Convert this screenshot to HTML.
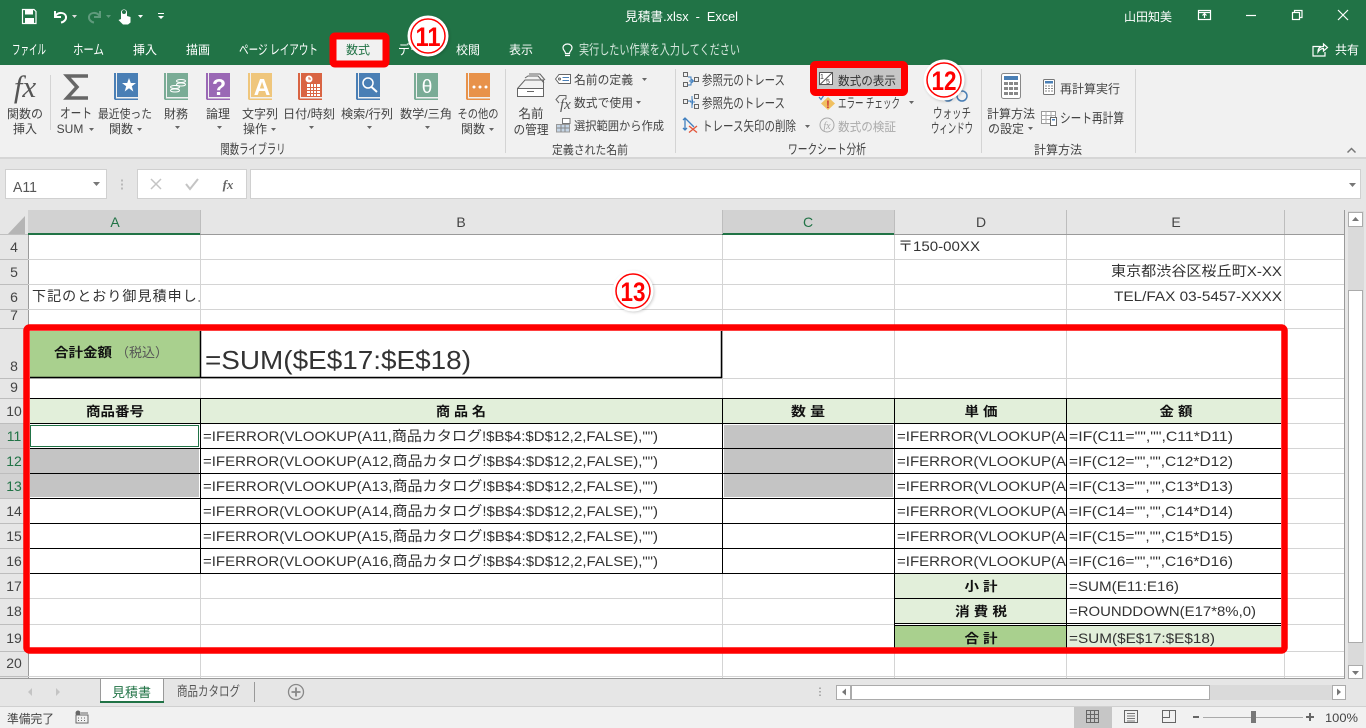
<!DOCTYPE html>
<html lang="ja">
<head>
<meta charset="utf-8">
<title>見積書.xlsx - Excel</title>
<style>
html,body{margin:0;padding:0;width:1366px;height:728px;overflow:hidden;background:#e6e6e6}
svg{display:block;position:absolute;left:0;top:0}
text{font-family:"Liberation Sans","Noto Sans CJK JP",sans-serif;white-space:pre}
.w{fill:#fff;font-size:12px}
.r{fill:#444;font-size:12px}
.w.kk,.r.kk{font-size:13.5px}
.c{text-anchor:middle}
.h{fill:#444;font-size:14px;text-anchor:middle}
.t{fill:#333;font-size:14px}
.b{fill:#111;font-size:13px;font-weight:bold;text-anchor:middle}
.grid{stroke:#d4d4d4;stroke-width:1;fill:none}
.k{stroke:#000;stroke-width:1;fill:none}
.hl{stroke:#bdbdbd;stroke-width:1;fill:none}
.wi{stroke:#fff;stroke-width:1.2;fill:none}
.ic{stroke:#666;stroke-width:1;fill:none}
.num{fill:#f00;font-weight:bold;text-anchor:middle;font-size:27px}
</style>
</head>
<body>
<svg width="1366" height="728" viewBox="0 0 1366 728" xmlns="http://www.w3.org/2000/svg">
<defs>
<clipPath id="ca"><rect x="30" y="285" width="170" height="24"/></clipPath>
<clipPath id="cd"><rect x="895" y="424" width="171" height="150"/></clipPath>
<filter id="sh" x="-30%" y="-30%" width="160%" height="160%"><feGaussianBlur stdDeviation="1.5"/></filter>
<g id="book"><rect x="0" y="0" width="2" height="26"/><rect x="3" y="0" width="21" height="24"/><rect x="0.500" y="25.500" width="23.500" height="1.500"/></g>
</defs>

<!-- title + tab bar -->
<rect width="1366" height="65" fill="#217346"/>
<!-- QAT -->
<path d="M22.500 9.500H34L36 11.500V23.500H22.500Z" class="wi" stroke-width="1.500"/>
<rect x="25" y="10" width="8" height="4.500" fill="#fff"/>
<rect x="25" y="18" width="9" height="5" fill="#fff"/>
<path d="M55 11V17H61M55 16.500C58 11.500 65 12 66 16.500C66.500 19.500 64 22 61 22.500" stroke="#fff" stroke-width="2" fill="none"/>
<path d="M72 15h5l-2.500 3z" fill="#ddd"/>
<path d="M100 11V17H94M100 16.500C97 11.500 90 12 89 16.500C88.500 19.500 91 22 94 22.500" stroke="#5f9a7c" stroke-width="2" fill="none"/>
<path d="M106 15h5l-2.500 3z" fill="#5f9a7c"/>
<path d="M121 12.500C121 8.500 127 8.500 127 12.500V16L130.500 17V22.500L128 24.500H123L118.500 20L121 19Z" fill="#fff"/>
<circle cx="124" cy="12" r="2" fill="#217346"/>
<path d="M138 15h5l-2.500 3z" fill="#fff"/>
<rect x="158" y="13" width="6" height="1" fill="#fff"/>
<path d="M158 16h6l-3 3z" fill="#fff"/>
<text x="625" y="21" class="w" style="font-size:12.500px" textLength="113" lengthAdjust="spacingAndGlyphs">見積書.xlsx  -  Excel</text>
<text x="1124" y="21" class="w" textLength="48" lengthAdjust="spacingAndGlyphs">山田知美</text>
<!-- window controls -->
<rect x="1198.500" y="10.500" width="12" height="9" class="wi"/>
<path d="M1198.500 12.500H1210.500M1204.500 18V14M1202.500 15.500L1204.500 13.500L1206.500 15.500" class="wi"/>
<path d="M1246 15.500H1256" class="wi"/>
<rect x="1292.500" y="12.500" width="7" height="7" class="wi"/>
<path d="M1294.500 12V10.500H1302V17.500H1300" class="wi"/>
<path d="M1338 10L1348 20M1348 10L1338 20" class="wi"/>
<!-- tabs -->
<text x="12" y="54.500" class="w kk" textLength="34" lengthAdjust="spacingAndGlyphs">ファイル</text>
<text x="73" y="54.500" class="w kk" textLength="31" lengthAdjust="spacingAndGlyphs">ホーム</text>
<text x="133" y="54" class="w" textLength="24">挿入</text>
<text x="186" y="54" class="w" textLength="24">描画</text>
<text x="239" y="54.500" class="w kk" textLength="79" lengthAdjust="spacingAndGlyphs">ページ レイアウト</text>
<text x="398" y="54.500" class="w kk" textLength="36" lengthAdjust="spacingAndGlyphs">データ</text>
<text x="456" y="54" class="w" textLength="24">校閲</text>
<text x="509" y="54" class="w" textLength="24">表示</text>
<path d="M565 55.500H570M565.500 53.500C565.500 51 563 50.500 563 47.800C563 45.500 565 44 567.500 44C570 44 572 45.500 572 47.800C572 50.500 569.500 51 569.500 53.500Z" class="wi" stroke-width="1"/>
<text x="579" y="54.500" class="w kk" style="fill:#d5e6dc" textLength="161" lengthAdjust="spacingAndGlyphs">実行したい作業を入力してください</text>
<path d="M1321 46.500H1313V56H1325V52M1318 52C1318 47.500 1321 46.500 1323.500 46.500V44L1327.500 47.500L1323.500 51V48.500C1321 48.500 1319.500 49.500 1318 52Z" class="wi" stroke-width="1"/>
<text x="1335" y="54" class="w" textLength="24">共有</text>

<!-- ribbon -->
<rect y="65" width="1366" height="93" fill="#f1f1f1"/>
<rect y="157" width="1366" height="2" fill="#d6d6d6"/>
<path d="M50.500 75V130M505.500 69V153M675.500 69V153M981.500 69V153M1135.500 69V153" stroke="#d4d4d4"/>

<text x="25" y="97" text-anchor="middle" style="font-family:'Liberation Serif',serif;font-style:italic;font-size:31px;fill:#555">fx</text>
<text x="25" y="118" class="r c">関数の</text>
<text x="25" y="133" class="r c">挿入</text>

<path d="M88 76H67L77 87L67 98H88" fill="none" stroke="#666" stroke-width="3.500"/>
<text x="76" y="118" class="r c kk" textLength="32" lengthAdjust="spacingAndGlyphs">オート</text>
<text x="70" y="133" class="r c">SUM</text>
<path d="M89 128h5l-2.500 3z" fill="#666"/>

<!-- function books -->
<g fill="#4a7fb5" transform="translate(114,73)"><use href="#book"/></g>
<path d="M129 78L130.800 83L136 83L131.800 86.200L133.300 91.500L129 88.300L124.700 91.500L126.200 86.200L122 83L127.200 83Z" fill="#fff"/>
<g fill="#7aac96" transform="translate(164,73)"><use href="#book"/></g>
<g fill="none" stroke="#fff"><ellipse cx="181" cy="81" rx="4.500" ry="1.500"/><ellipse cx="181" cy="84.500" rx="4.500" ry="1.500"/><ellipse cx="175" cy="87" rx="4.500" ry="1.500"/><ellipse cx="175" cy="90.500" rx="4.500" ry="1.500"/></g>
<g fill="#9a68b5" transform="translate(206,73)"><use href="#book"/></g>
<text x="219" y="95" style="fill:#fff;font-size:23px;font-weight:bold" text-anchor="middle">?</text>
<g fill="#efc67c" transform="translate(248,73)"><use href="#book"/></g>
<text x="262" y="95" style="fill:#fff;font-size:23px;font-weight:bold" text-anchor="middle">A</text>
<g fill="#d96443" transform="translate(298,73)"><use href="#book"/></g>
<circle cx="309" cy="79" r="3.500" fill="#fff"/>
<path d="M309 77V79H311" stroke="#d96443" fill="none"/>
<path d="M307 84H320V96H307Z" fill="#fff"/>
<path d="M310.500 84V96M313.500 84V96M316.500 84V96M307 87.500H320M307 90.500H320M307 93.500H320" stroke="#d96443"/>
<g fill="#4a7fb5" transform="translate(356,73)"><use href="#book"/></g>
<circle cx="368" cy="83" r="5" fill="none" stroke="#fff" stroke-width="1.500"/>
<path d="M371.500 87L377 92" stroke="#fff" stroke-width="2"/>
<g fill="#7aac96" transform="translate(414,73)"><use href="#book"/></g>
<text x="427" y="93" style="fill:#fff;font-size:19px" text-anchor="middle">θ</text>
<g fill="#e8924a" transform="translate(466,73)"><use href="#book"/></g>
<circle cx="474" cy="87" r="1.500" fill="#fff"/><circle cx="480" cy="87" r="1.500" fill="#fff"/><circle cx="486" cy="87" r="1.500" fill="#fff"/>

<text x="125" y="118" class="r c" textLength="54" lengthAdjust="spacingAndGlyphs">最近使った</text>
<text x="121" y="133" class="r c">関数</text>
<path d="M137 128h5l-2.500 3z" fill="#666"/>
<text x="176" y="118" class="r c">財務</text><path d="M175 126h5l-2.500 3z" fill="#666"/>
<text x="218" y="118" class="r c">論理</text><path d="M217 126h5l-2.500 3z" fill="#666"/>
<text x="260" y="118" class="r c">文字列</text>
<text x="255" y="133" class="r c">操作</text><path d="M271 128h5l-2.500 3z" fill="#666"/>
<text x="309" y="118" class="r c" textLength="52" lengthAdjust="spacingAndGlyphs">日付/時刻</text><path d="M309 126h5l-2.500 3z" fill="#666"/>
<text x="367" y="118" class="r c" textLength="52" lengthAdjust="spacingAndGlyphs">検索/行列</text><path d="M367 126h5l-2.500 3z" fill="#666"/>
<text x="426" y="118" class="r c" textLength="52" lengthAdjust="spacingAndGlyphs">数学/三角</text><path d="M425 126h5l-2.500 3z" fill="#666"/>
<text x="478" y="118" class="r c" textLength="41" lengthAdjust="spacingAndGlyphs">その他の</text>
<text x="473" y="133" class="r c">関数</text><path d="M489 128h5l-2.500 3z" fill="#666"/>
<text x="253" y="154" class="r c kk" textLength="65" lengthAdjust="spacingAndGlyphs">関数ライブラリ</text>

<!-- defined names -->
<g class="ic" stroke="#666" fill="none">
<rect x="517.500" y="88.500" width="26" height="8" fill="#fff"/>
<path d="M517.500 88.500L525 80H543.500L543.500 88.500"/>
<path d="M525 78L528 76H538L544 83"/>
<path d="M529 74H540L545 80"/>
<path d="M527 91.500H534"/>
</g>
<text x="531" y="118" class="r c" style="font-size:12.500px">名前</text>
<text x="531" y="134" class="r c" style="font-size:12.500px" textLength="35" lengthAdjust="spacingAndGlyphs">の管理</text>
<path d="M555.500 79L559 74.500H570.500V83.500H559Z" fill="#fff" stroke="#666"/>
<path d="M562.500 77.500H569M562.500 80.500H569" stroke="#4a7fb5"/>
<circle cx="559.500" cy="79" r="1" fill="none" stroke="#666"/>
<text x="574" y="84" class="r" textLength="59" lengthAdjust="spacingAndGlyphs">名前の定義</text>
<path d="M642 78h5l-2.500 3z" fill="#666"/>
<path d="M559 103L556 99.500L559.500 95.500H566V99" class="ic"/>
<text x="560" y="109" style="font-family:'Liberation Serif',serif;font-style:italic;font-size:15px;fill:#555">fx</text>
<text x="574" y="107" class="r" textLength="59" lengthAdjust="spacingAndGlyphs">数式で使用</text>
<path d="M636 101h5l-2.500 3z" fill="#666"/>
<rect x="556.500" y="124.500" width="13" height="7.500" fill="#c5d5e5" stroke="#999"/>
<rect x="562.500" y="118.500" width="7.500" height="5" fill="#fff" stroke="#777"/>
<path d="M561 124.500V132M565 124.500V132M556.500 128H569.500" stroke="#888"/>
<text x="574" y="130" class="r" textLength="90" lengthAdjust="spacingAndGlyphs">選択範囲から作成</text>
<text x="590" y="154" class="r c" textLength="76" lengthAdjust="spacingAndGlyphs">定義された名前</text>

<!-- formula auditing -->
<g fill="none" stroke="#666">
<rect x="683.500" y="72.500" width="4" height="4"/><rect x="683.500" y="82.500" width="4" height="4"/><rect x="694.500" y="77.500" width="4" height="4"/>
<rect x="683.500" y="99.500" width="4" height="4"/><rect x="694.500" y="94.500" width="4" height="4"/><rect x="694.500" y="104.500" width="4" height="4"/>
</g>
<path d="M688 77H691V85H688M689 81H693M691.500 79L693.500 81L691.500 83" stroke="#3f7fbf" fill="none"/>
<path d="M688 101H691M692 96V108M690 102H695M692.500 99.500V104.500" stroke="#3f7fbf" fill="none"/>
<text x="702" y="85" class="r kk" textLength="83" lengthAdjust="spacingAndGlyphs">参照元のトレース</text>
<text x="702" y="108" class="r kk" textLength="83" lengthAdjust="spacingAndGlyphs">参照先のトレース</text>
<path d="M685 118V130M683 120L685 118L687 120M683 128L685 130L687 128M686 119L694 127" stroke="#3f7fbf" fill="none" stroke-width="1.300"/>
<path d="M689 126L697 132.500M697 126L689 132.500" stroke="#e2553a" stroke-width="1.300"/>
<text x="702" y="131" class="r kk" textLength="94" lengthAdjust="spacingAndGlyphs">トレース矢印の削除</text>
<path d="M805 125h5l-2.500 3z" fill="#666"/>
<rect x="817" y="68" width="84" height="21" fill="#c6c6c6"/>
<rect x="819.500" y="72.500" width="13" height="12" fill="#fff" stroke="#555"/>
<path d="M819.500 85L832.500 72.500" stroke="#555"/>
<text x="820" y="79" style="font-size:7px;fill:#333">1</text>
<text x="826" y="84" style="font-size:7px;fill:#333">5</text>
<text x="838" y="85" class="r" style="fill:#333" textLength="58" lengthAdjust="spacingAndGlyphs">数式の表示</text>
<path d="M828 97L835 103.500L828 110L821 103.500Z" fill="#f0c060"/>
<text x="828" y="108" style="font-size:11px;font-weight:bold;fill:#c33" text-anchor="middle">!</text>
<path d="M819 97L821 99.500L824 95" stroke="#3f7fbf" fill="none" stroke-width="1.200"/>
<text x="838" y="108" class="r kk" textLength="62" lengthAdjust="spacingAndGlyphs">エラー チェック</text>
<path d="M909 101h5l-2.500 3z" fill="#666"/>
<circle cx="827" cy="125" r="7" fill="none" stroke="#a8a8a8"/>
<text x="827" y="129" style="font-family:'Liberation Serif',serif;font-style:italic;font-size:10px;fill:#a8a8a8" text-anchor="middle">fx</text>
<text x="838" y="131" class="r" style="fill:#aaa" textLength="58" lengthAdjust="spacingAndGlyphs">数式の検証</text>
<text x="827" y="154" class="r c kk" textLength="78" lengthAdjust="spacingAndGlyphs">ワークシート分析</text>
<g fill="none" stroke="#4a7fb5" stroke-width="1.500"><circle cx="948" cy="96" r="5"/><circle cx="962" cy="96" r="5"/><path d="M953 95H957"/></g>
<text x="952" y="118" class="r c kk" textLength="38" lengthAdjust="spacingAndGlyphs">ウォッチ</text>
<text x="952" y="133" class="r c kk" textLength="42" lengthAdjust="spacingAndGlyphs">ウィンドウ</text>

<!-- calculation -->
<rect x="1001.500" y="73.500" width="19" height="25" rx="2" fill="#fff" stroke="#888"/>
<rect x="1004" y="76" width="14" height="4" fill="#4a7fb5"/>
<g fill="#888"><rect x="1004" y="82" width="4" height="3"/><rect x="1009" y="82" width="4" height="3"/><rect x="1014" y="82" width="4" height="3"/><rect x="1004" y="87" width="4" height="3"/><rect x="1009" y="87" width="4" height="3"/><rect x="1014" y="87" width="4" height="3"/><rect x="1004" y="92" width="4" height="3"/><rect x="1009" y="92" width="4" height="3"/><rect x="1014" y="92" width="4" height="3"/></g>
<text x="1011" y="118" class="r c" textLength="48" lengthAdjust="spacingAndGlyphs">計算方法</text>
<text x="1006" y="133" class="r c" textLength="36" lengthAdjust="spacingAndGlyphs">の設定</text>
<path d="M1028 127h5l-2.500 3z" fill="#666"/>
<rect x="1043.500" y="79.500" width="11" height="15" rx="1" fill="#fff" stroke="#777"/>
<rect x="1045" y="81" width="8" height="2.500" fill="#4a7fb5"/>
<path d="M1045 86h8M1045 88.500h8M1045 91h8" stroke="#888" stroke-dasharray="2 1"/>
<text x="1060" y="93" class="r" textLength="60" lengthAdjust="spacingAndGlyphs">再計算実行</text>
<rect x="1041.500" y="111.500" width="14" height="12" fill="#fff" stroke="#999"/>
<path d="M1041.500 115.500H1055.500M1041.500 119.500H1055.500M1046 111.500V123.500M1051 111.500V123.500" stroke="#aaa"/>
<rect x="1050.500" y="117.500" width="6" height="8" fill="#fff" stroke="#666"/>
<rect x="1052" y="119" width="3" height="1.500" fill="#4a7fb5"/>
<text x="1060" y="123" class="r kk" textLength="64" lengthAdjust="spacingAndGlyphs">シート再計算</text>
<text x="1058" y="154" class="r c" textLength="48" lengthAdjust="spacingAndGlyphs">計算方法</text>
<path d="M1347.500 152.500L1351.500 148.500L1355.500 152.500" stroke="#777" stroke-width="1.500" fill="none"/>

<!-- formula bar -->
<rect x="5.500" y="169.500" width="101" height="29" fill="#fff" stroke="#d0d0d0"/>
<text x="13" y="192" style="font-size:15px;fill:#555" textLength="24" lengthAdjust="spacingAndGlyphs">A11</text>
<path d="M93 182h7l-3.500 4z" fill="#777"/>
<path d="M122 179.500v2M122 183.500v2M122 187.500v2" stroke="#aaa" stroke-width="1.500"/>
<rect x="137.500" y="169.500" width="109" height="29" fill="#fff" stroke="#d0d0d0"/>
<path d="M151 179L161 189M161 179L151 189" stroke="#c4c4c4" stroke-width="1.500"/>
<path d="M186 184L190 189L198 179" stroke="#c4c4c4" stroke-width="2" fill="none"/>
<text x="228" y="189" text-anchor="middle" style="font-family:'Liberation Serif',serif;font-style:italic;font-weight:bold;font-size:13px;fill:#666">fx</text>
<rect x="250.500" y="169.500" width="1110" height="29" fill="#fff" stroke="#d0d0d0"/>
<path d="M1349 183h7l-3.500 4z" fill="#777"/>

<!-- column headers -->
<rect x="0" y="210" width="1344" height="25" fill="#e6e6e6"/>
<path d="M25 216V234H8Z" fill="#b5b5b5"/>
<rect x="28" y="210" width="172" height="25" fill="#d2d2d2"/>
<rect x="722" y="210" width="172" height="25" fill="#d2d2d2"/>
<rect x="28" y="233" width="172" height="2" fill="#217346"/>
<rect x="722" y="233" width="172" height="2" fill="#217346"/>
<path d="M200.500 210V234M722.500 210V234M894.500 210V234M1066.500 210V234M1284.500 210V234" class="hl"/>
<rect x="0" y="234.500" width="28" height="0.800" fill="#9a9a9a"/>
<rect x="200" y="234" width="522" height="1" fill="#9a9a9a"/>
<rect x="894" y="234" width="450" height="1" fill="#9a9a9a"/>
<text x="115" y="227" class="h" style="fill:#217346">A</text>
<text x="461" y="227" class="h">B</text>
<text x="808" y="227" class="h" style="fill:#217346">C</text>
<text x="981" y="227" class="h">D</text>
<text x="1176" y="227" class="h">E</text>

<!-- sheet background -->
<rect x="28" y="235" width="1316" height="443" fill="#fff"/>
<rect x="0" y="235" width="28" height="443" fill="#e6e6e6"/>
<rect x="0" y="423" width="28" height="75" fill="#d2d2d2"/>
<path d="M28.500 235V678M1344.500 210V678" stroke="#9a9a9a"/>
<!-- row header lines -->
<path d="M0 259.500H28M0 284.500H28M0 309.500H28M0 328.500H28M0 378.500H28M0 398.500H28M0 423.500H28M0 448.500H28M0 473.500H28M0 498.500H28M0 523.500H28M0 548.500H28M0 573.500H28M0 598.500H28M0 624.500H28M0 651.500H28M0 676.500H28" class="hl"/>
<!-- grid -->
<path class="grid" d="M28 259.500H1344M28 284.500H1344M28 309.500H1344M28 328.500H1344M28 378.500H1344M28 398.500H1344M1284 423.500H1344M1284 448.500H1344M1284 473.500H1344M1284 498.500H1344M1284 523.500H1344M1284 548.500H1344M1284 573.500H1344M28 598.500H894M1284 598.500H1344M28 624.500H894M1284 624.500H1344M28 651.500H1344M28 676.500H1344"/>
<path class="grid" d="M200.500 235V678M722.500 235V678M894.500 235V678M1066.500 235V328M1066.500 328V398M1066.500 651V678M1284.500 235V678"/>

<!-- row numbers -->
<text x="14" y="252" class="h">4</text>
<text x="14" y="277" class="h">5</text>
<text x="14" y="302" class="h">6</text>
<text x="14" y="320" class="h">7</text>
<text x="14" y="371" class="h">8</text>
<text x="14" y="392" class="h">9</text>
<text x="14" y="416" class="h">10</text>
<text x="14" y="441" class="h" style="fill:#217346">11</text>
<text x="14" y="466" class="h" style="fill:#217346">12</text>
<text x="14" y="491" class="h" style="fill:#217346">13</text>
<text x="14" y="516" class="h">14</text>
<text x="14" y="541" class="h">15</text>
<text x="14" y="566" class="h">16</text>
<text x="14" y="591" class="h">17</text>
<text x="14" y="616" class="h">18</text>
<text x="14" y="643" class="h">19</text>
<text x="14" y="668" class="h">20</text>

<!-- top cells -->
<text x="898" y="251" class="t" textLength="82" lengthAdjust="spacingAndGlyphs">〒150-00XX</text>
<text x="1111" y="276" class="t" textLength="171" lengthAdjust="spacingAndGlyphs">東京都渋谷区桜丘町X-XX</text>
<text x="1114" y="301" class="t" textLength="168" lengthAdjust="spacingAndGlyphs">TEL/FAX 03-5457-XXXX</text>
<g clip-path="url(#ca)"><text x="32" y="301" class="t" textLength="225">下記のとおり御見積申し上げます</text></g>

<!-- table fills -->
<rect x="30" y="331" width="170" height="47" fill="#a9d08e"/>
<rect x="30" y="398" width="1251" height="25" fill="#e2efda"/>
<rect x="895" y="574" width="171" height="50" fill="#e2efda"/>
<rect x="895" y="626" width="171" height="22" fill="#a9d08e"/>
<rect x="1067" y="626" width="214" height="22" fill="#e2efda"/>
<rect x="30" y="449" width="169" height="24" fill="#c4c4c4"/>
<rect x="30" y="474" width="169" height="23" fill="#c4c4c4"/>
<rect x="724" y="425" width="169" height="23" fill="#c4c4c4"/>
<rect x="724" y="449" width="169" height="24" fill="#c4c4c4"/>
<rect x="724" y="474" width="169" height="23" fill="#c4c4c4"/>

<!-- table borders -->
<path class="k" d="M30 398.500H1281M30 423.500H1281M30 448.500H1281M30 473.500H1281M30 498.500H1281M30 523.500H1281M30 548.500H1281M30 573.500H1281M895 598.500H1281M895 623.500H1281M895 625.500H1281"/>
<path class="k" d="M200.500 398V574M722.500 398V574M894.500 398V648M1066.500 398V648"/>
<path class="k" d="M200.500 331V378M721.500 331V378M30 377.500H722" style="stroke-width:1.500"/>
<rect x="30.500" y="425.500" width="168" height="21" fill="#fff" stroke="#217346"/>

<!-- table text -->
<text x="54" y="357" style="font-size:13px;font-weight:bold;fill:#111" textLength="58" lengthAdjust="spacingAndGlyphs">合計金額</text>
<text x="116" y="357" style="font-size:13px;fill:#555" textLength="52" lengthAdjust="spacingAndGlyphs">（税込）</text>
<text x="205" y="369" style="font-size:26px;fill:#333" textLength="266" lengthAdjust="spacingAndGlyphs">=SUM($E$17:$E$18)</text>

<text x="115" y="416" class="b" textLength="58" lengthAdjust="spacingAndGlyphs">商品番号</text>
<text x="461" y="416" class="b" textLength="50" lengthAdjust="spacingAndGlyphs">商 品 名</text>
<text x="808" y="416" class="b" textLength="34" lengthAdjust="spacingAndGlyphs">数 量</text>
<text x="981" y="416" class="b" textLength="33" lengthAdjust="spacingAndGlyphs">単 価</text>
<text x="1176" y="416" class="b" textLength="33" lengthAdjust="spacingAndGlyphs">金 額</text>

<text x="203" y="441" class="t" textLength="455" lengthAdjust="spacingAndGlyphs">=IFERROR(VLOOKUP(A11,商品カタログ!$B$4:$D$12,2,FALSE),"")</text>
<text x="203" y="466" class="t" textLength="455" lengthAdjust="spacingAndGlyphs">=IFERROR(VLOOKUP(A12,商品カタログ!$B$4:$D$12,2,FALSE),"")</text>
<text x="203" y="491" class="t" textLength="455" lengthAdjust="spacingAndGlyphs">=IFERROR(VLOOKUP(A13,商品カタログ!$B$4:$D$12,2,FALSE),"")</text>
<text x="203" y="516" class="t" textLength="455" lengthAdjust="spacingAndGlyphs">=IFERROR(VLOOKUP(A14,商品カタログ!$B$4:$D$12,2,FALSE),"")</text>
<text x="203" y="541" class="t" textLength="455" lengthAdjust="spacingAndGlyphs">=IFERROR(VLOOKUP(A15,商品カタログ!$B$4:$D$12,2,FALSE),"")</text>
<text x="203" y="566" class="t" textLength="455" lengthAdjust="spacingAndGlyphs">=IFERROR(VLOOKUP(A16,商品カタログ!$B$4:$D$12,2,FALSE),"")</text>
<g clip-path="url(#cd)">
<text x="897" y="441" class="t" textLength="169" lengthAdjust="spacingAndGlyphs">=IFERROR(VLOOKUP(A</text>
<text x="897" y="466" class="t" textLength="169" lengthAdjust="spacingAndGlyphs">=IFERROR(VLOOKUP(A</text>
<text x="897" y="491" class="t" textLength="169" lengthAdjust="spacingAndGlyphs">=IFERROR(VLOOKUP(A</text>
<text x="897" y="516" class="t" textLength="169" lengthAdjust="spacingAndGlyphs">=IFERROR(VLOOKUP(A</text>
<text x="897" y="541" class="t" textLength="169" lengthAdjust="spacingAndGlyphs">=IFERROR(VLOOKUP(A</text>
<text x="897" y="566" class="t" textLength="169" lengthAdjust="spacingAndGlyphs">=IFERROR(VLOOKUP(A</text>
</g>
<text x="1069" y="441" class="t" textLength="164" lengthAdjust="spacingAndGlyphs">=IF(C11="","",C11*D11)</text>
<text x="1069" y="466" class="t" textLength="164" lengthAdjust="spacingAndGlyphs">=IF(C12="","",C12*D12)</text>
<text x="1069" y="491" class="t" textLength="164" lengthAdjust="spacingAndGlyphs">=IF(C13="","",C13*D13)</text>
<text x="1069" y="516" class="t" textLength="164" lengthAdjust="spacingAndGlyphs">=IF(C14="","",C14*D14)</text>
<text x="1069" y="541" class="t" textLength="164" lengthAdjust="spacingAndGlyphs">=IF(C15="","",C15*D15)</text>
<text x="1069" y="566" class="t" textLength="164" lengthAdjust="spacingAndGlyphs">=IF(C16="","",C16*D16)</text>
<text x="981" y="591" class="b" textLength="33" lengthAdjust="spacingAndGlyphs">小 計</text>
<text x="981" y="616" class="b" textLength="52" lengthAdjust="spacingAndGlyphs">消 費 税</text>
<text x="981" y="643" class="b" textLength="33" lengthAdjust="spacingAndGlyphs">合 計</text>
<text x="1069" y="591" class="t" textLength="110" lengthAdjust="spacingAndGlyphs">=SUM(E11:E16)</text>
<text x="1069" y="616" class="t" textLength="187" lengthAdjust="spacingAndGlyphs">=ROUNDDOWN(E17*8%,0)</text>
<text x="1069" y="643" class="t" textLength="146" lengthAdjust="spacingAndGlyphs">=SUM($E$17:$E$18)</text>

<!-- scrollbars -->
<rect x="1345" y="210" width="21" height="497" fill="#e6e6e6"/>
<rect x="1348" y="211" width="16" height="468" fill="#dadada"/>
<rect x="1348.500" y="212.500" width="14" height="14" fill="#fff" stroke="#ababab"/>
<path d="M1352 221h7l-3.500-4z" fill="#777"/>
<rect x="1348.500" y="290.500" width="14" height="352" fill="#fff" stroke="#ababab"/>
<rect x="1348.500" y="665.500" width="14" height="13" fill="#fff" stroke="#ababab"/>
<path d="M1352 671h7l-3.500 4z" fill="#777"/>

<!-- sheet tabs -->
<rect x="0" y="678" width="1345" height="29" fill="#e6e6e6"/>
<rect x="0" y="678" width="1345" height="1" fill="#9a9a9a"/>
<path d="M32 688v8l-4-4zM56 688v8l4-4z" fill="#c4c4c4"/>
<path d="M100.500 702V678.500H163.500V702" fill="#fff" stroke="#9a9a9a"/>
<rect x="100" y="701" width="64" height="2" fill="#217346"/>
<text x="112" y="697" class="w" style="fill:#217346;font-size:13px" textLength="39" lengthAdjust="spacingAndGlyphs">見積書</text>
<text x="177" y="696" class="w" style="fill:#555;font-size:13.500px" textLength="63" lengthAdjust="spacingAndGlyphs">商品カタログ</text>
<path d="M254.500 682V702" stroke="#999"/>
<circle cx="296" cy="692" r="7.500" fill="none" stroke="#888" stroke-width="1.300"/>
<path d="M291.500 692H300.500M296 687.500V696.500" stroke="#888" stroke-width="1.800"/>
<path d="M820 687.500v1.500M820 691v1.500M820 694.500v1.500" stroke="#999" stroke-width="1.500"/>
<rect x="836" y="685" width="510" height="15" fill="#dadada"/>
<rect x="836.500" y="685.500" width="14" height="14" fill="#fff" stroke="#ababab"/>
<path d="M846 688.500v7l-4-3.500z" fill="#777"/>
<rect x="851.500" y="685.500" width="358" height="14" fill="#fff" stroke="#ababab"/>
<rect x="1332.500" y="685.500" width="13" height="14" fill="#fff" stroke="#ababab"/>
<path d="M1337 688.500v7l4-3.500z" fill="#777"/>

<!-- status bar -->
<rect x="0" y="707" width="1366" height="21" fill="#f1f1f1"/>
<rect x="0" y="706" width="1366" height="1" fill="#d0d0d0"/>
<text x="7" y="723" class="r" textLength="47" lengthAdjust="spacingAndGlyphs">準備完了</text>
<circle cx="78" cy="713" r="2.500" fill="#666"/>
<path d="M76 715H88V723H76Z" fill="none" stroke="#666"/>
<path d="M78 718h1M81 718h1M84 718h1M78 720.500h1M81 720.500h1M84 720.500h1M81 713h7" stroke="#666"/>
<rect x="1074" y="707" width="38" height="21" fill="#c6c6c6"/>
<path d="M1086.500 710.500H1098.500V722.500H1086.500ZM1086.500 714.500H1098.500M1086.500 718.500H1098.500M1090.500 710.500V722.500M1094.500 710.500V722.500" fill="none" stroke="#666"/>
<rect x="1124.500" y="710.500" width="13" height="12" fill="none" stroke="#666"/>
<path d="M1127 713.500H1135M1127 716H1135M1127 718.500H1135M1127 721H1135" stroke="#777"/>
<path d="M1162.500 722.500V710.500H1175.500V722.500ZM1169.500 710.500V717.500H1162.500" fill="none" stroke="#666"/>
<rect x="1193" y="716" width="6" height="2" fill="#666"/>
<rect x="1203" y="717" width="100" height="1" fill="#aaa"/>
<rect x="1251" y="711" width="5" height="12" fill="#777"/>
<path d="M1306 717H1314M1310 713V721" stroke="#666" stroke-width="2"/>
<text x="1325" y="722" class="r" textLength="33" lengthAdjust="spacingAndGlyphs">100%</text>

<!-- red highlight boxes -->
<rect x="333" y="36" width="53" height="28" rx="2" fill="#f1f1f1" stroke="#f00" stroke-width="7"/>
<text x="358" y="54" class="r c" style="fill:#217346">数式</text>
<rect x="813.500" y="64.500" width="91" height="28" rx="2" fill="none" stroke="#f00" stroke-width="7"/>
<rect x="26.500" y="327.500" width="1258" height="323" rx="3" fill="none" stroke="#f00" stroke-width="6.500"/>

<!-- circled numbers -->
<circle cx="429" cy="37" r="20" fill="#000" opacity=".25" filter="url(#sh)"/>
<circle cx="428" cy="36" r="20.500" fill="#fff"/>
<circle cx="428" cy="36" r="17" fill="none" stroke="#f00" stroke-width="1.500"/>
<text x="428" y="46" class="num" textLength="25" lengthAdjust="spacingAndGlyphs">11</text>
<circle cx="945" cy="81" r="20" fill="#000" opacity=".25" filter="url(#sh)"/>
<circle cx="944" cy="80" r="20.500" fill="#fff"/>
<circle cx="944" cy="80" r="17" fill="none" stroke="#f00" stroke-width="1.500"/>
<text x="944" y="90" class="num" textLength="25" lengthAdjust="spacingAndGlyphs">12</text>
<circle cx="634" cy="292" r="20" fill="#000" opacity=".25" filter="url(#sh)"/>
<circle cx="633" cy="291" r="20.500" fill="#fff"/>
<circle cx="633" cy="291" r="17" fill="none" stroke="#f00" stroke-width="1.500"/>
<text x="633" y="301" class="num" textLength="25" lengthAdjust="spacingAndGlyphs">13</text>
</svg>
</body>
</html>
